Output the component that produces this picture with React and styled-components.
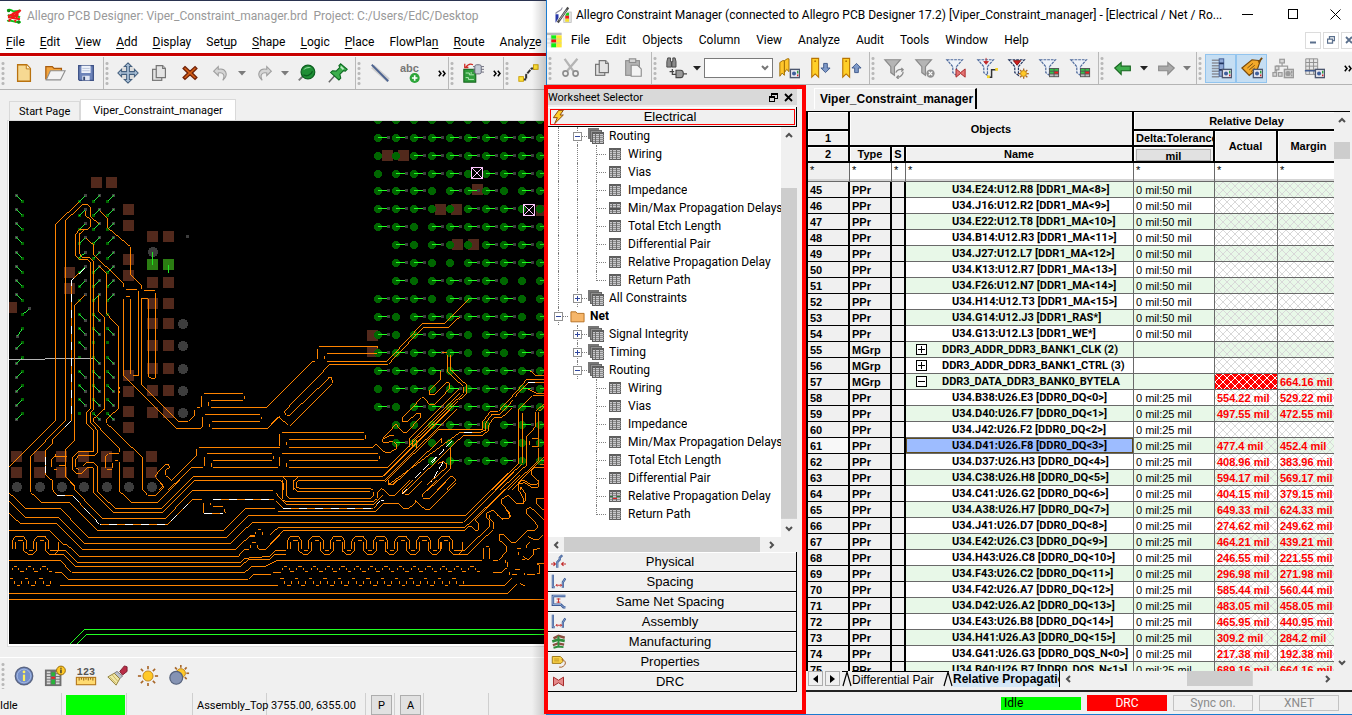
import React from 'react';
import styled, { createGlobalStyle, css } from 'styled-components';

const GlobalStyle = createGlobalStyle`
  * {
    box-sizing: border-box;
  }

  html, body {
    margin: 0;
    padding: 0;
  }

  body {
    background: #f0f0f0;
    color: #000;
    font-family: Roboto, 'Noto Sans', sans-serif;
    font-size: 12px;
    overflow: hidden;
  }

  button, select {
    margin: 0;
    padding: 0;
    border: 0;
    background: none;
    color: inherit;
    font: inherit;
    cursor: default;
  }
`;

/* ---------- data ---------- */

const designerMenu = ['_File', '_Edit', '_View', '_Add', '_Display', 'Set_up', '_Shape', '_Logic', '_Place', 'FlowPla_n', '_Route', 'Analy_ze'];

const managerMenu = ['File', 'Edit', 'Objects', 'Column', 'View', 'Analyze', 'Audit', 'Tools', 'Window', 'Help'];

const routingSheets = ['Wiring', 'Vias', 'Impedance', 'Min/Max Propagation Delays', 'Total Etch Length', 'Differential Pair', 'Relative Propagation Delay', 'Return Path'];

const leaves = (outer, marked, mark) =>
  routingSheets.map((label, i) => ({
    label,
    guides: [outer, outer, i === routingSheets.length - 1 ? 'last' : 'branch'],
    icon: i === marked ? mark : 'sheet',
  }));

const treeRows = [
  { label: 'Routing', guides: ['line', 'minus'], icon: 'sheets' },
  ...leaves('line', 3, 'sheetDark'),
  { label: 'All Constraints', guides: ['line', 'plus'], icon: 'sheets' },
  { label: 'Net', guides: ['minus'], icon: 'folder', bold: true },
  { label: 'Signal Integrity', guides: ['none', 'plus'], icon: 'sheets' },
  { label: 'Timing', guides: ['none', 'plus'], icon: 'sheets' },
  { label: 'Routing', guides: ['none', 'minus'], icon: 'sheets' },
  ...leaves('none', 6, 'sheetMarked'),
];

const categories = [
  ['Physical', 'physical'],
  ['Spacing', 'spacing'],
  ['Same Net Spacing', 'sameNet'],
  ['Assembly', 'spacing'],
  ['Manufacturing', 'layers'],
  ['Properties', 'tag'],
  ['DRC', 'bowtie'],
];

const ppr = (name, delta, actual, margin) => ({ type: 'PPr', name, delta, actual, margin });

const sheetRows = [
  ppr('U34.E24:U12.R8 [DDR1_MA<8>]', 50),
  ppr('U34.J16:U12.R2 [DDR1_MA<9>]', 50),
  ppr('U34.E22:U12.T8 [DDR1_MA<10>]', 50),
  ppr('U34.B14:U12.R3 [DDR1_MA<11>]', 50),
  ppr('U34.J27:U12.L7 [DDR1_MA<12>]', 50),
  ppr('U34.K13:U12.R7 [DDR1_MA<13>]', 50),
  ppr('U34.F26:U12.N7 [DDR1_MA<14>]', 50),
  ppr('U34.H14:U12.T3 [DDR1_MA<15>]', 50),
  ppr('U34.G14:U12.J3 [DDR1_RAS*]', 50),
  ppr('U34.G13:U12.L3 [DDR1_WE*]', 50),
  { type: 'MGrp', name: 'DDR3_ADDR_DDR3_BANK1_CLK (2)' },
  { type: 'MGrp', name: 'DDR3_ADDR_DDR3_BANK1_CTRL (3)' },
  { type: 'MGrp', name: 'DDR3_DATA_DDR3_BANK0_BYTELA', open: true, failed: true, margin: '664.16' },
  ppr('U34.B38:U26.E3 [DDR0_DQ<0>]', 25, '554.22', '529.22'),
  ppr('U34.D40:U26.F7 [DDR0_DQ<1>]', 25, '497.55', '472.55'),
  ppr('U34.J42:U26.F2 [DDR0_DQ<2>]', 25),
  ppr('U34.D41:U26.F8 [DDR0_DQ<3>]', 25, '477.4', '452.4'),
  ppr('U34.D37:U26.H3 [DDR0_DQ<4>]', 25, '408.96', '383.96'),
  ppr('U34.C38:U26.H8 [DDR0_DQ<5>]', 25, '594.17', '569.17'),
  ppr('U34.C41:U26.G2 [DDR0_DQ<6>]', 25, '404.15', '379.15'),
  ppr('U34.A38:U26.H7 [DDR0_DQ<7>]', 25, '649.33', '624.33'),
  ppr('U34.J41:U26.D7 [DDR0_DQ<8>]', 25, '274.62', '249.62'),
  ppr('U34.E42:U26.C3 [DDR0_DQ<9>]', 25, '464.21', '439.21'),
  ppr('U34.H43:U26.C8 [DDR0_DQ<10>]', 25, '246.55', '221.55'),
  ppr('U34.F43:U26.C2 [DDR0_DQ<11>]', 25, '296.98', '271.98'),
  ppr('U34.F42:U26.A7 [DDR0_DQ<12>]', 25, '585.44', '560.44'),
  ppr('U34.D42:U26.A2 [DDR0_DQ<13>]', 25, '483.05', '458.05'),
  ppr('U34.E43:U26.B8 [DDR0_DQ<14>]', 25, '465.95', '440.95'),
  ppr('U34.H41:U26.A3 [DDR0_DQ<15>]', 25, '309.2', '284.2'),
  ppr('U34.G41:U26.G3 [DDR0_DQS_N<0>]', 25, '217.38', '192.38'),
  ppr('U34.B40:U26.B7 [DDR0_DQS_N<1>]', 25, '689.16', '664.16'),
];

/* ---------- icons ---------- */

const funnel = (fill, stroke, dash) => (
  <path d="M2 3H19L12.500 10.500V20L8.500 17V10.500Z" fill={fill} stroke={stroke} strokeWidth="1.300" strokeDasharray={dash} />
);

const sheetGrid = (x, y) => (
  <g>
    <rect x={x} y={y} width="11" height="11" fill="#c9c9cc" stroke="#5e5e5e" />
    <path d={`M${x} ${y + 1}h11`} stroke="#5e5e5e" />
    <path d={`M${x} ${y + 3}h11M${x} ${y + 5}h11M${x} ${y + 7}h11M${x} ${y + 9}h11`} stroke="#8c8c8c" />
    <path d={`M${x + 3} ${y}v11M${x + 7} ${y}v11`} stroke="#6a6a6a" />
  </g>
);

const terminal = (gray) => (
  <g>
    <rect x="13.500" y="13.500" width="10" height="9" fill={gray ? '#cfcfcf' : '#e8e8f0'} stroke={gray ? '#9a9a9a' : '#4c566e'} strokeWidth="1.500" />
    <circle cx="17.500" cy="18" r="2.200" fill={gray ? '#9a9a9a' : '#3f5f9c'} />
    <path d="M21.500 15v3" stroke={gray ? '#999' : '#2f9e3c'} strokeWidth="1.500" />
    <path d="M21.500 19v2" stroke={gray ? '#999' : '#c22'} strokeWidth="1.500" />
  </g>
);

const rays = (cx, cy, a, b) =>
  [0, 45, 90, 135, 180, 225, 270, 315].map((r) => (
    <path key={r} d={`M${cx} ${cy - a}V${cy - b}`} transform={`rotate(${r} ${cx} ${cy})`} stroke="#a8672a" strokeWidth="1.800" />
  ));

const flag = (x, y, h) => (
  <path d={`M${x} ${y}l3-2h2v${h}l-2.500-2.500-2.500 3.500z`} fill="#ffc62b" stroke="#9c6a00" />
);

const bookmark = (
  <g>
    <path d="M3 1.500H10.500V22L6.700 18.500 3 22Z" fill="#ffcf28" stroke="#b87400" strokeWidth="1.200" />
    <circle cx="6.700" cy="4.500" r="1" fill="#b87400" />
  </g>
);

const drawings = {
  board: (
    <g fill="none" strokeWidth="2">
      <path d="M2 4c4-4 8 2 10 1s6 1 9-2M2 20c5-4 9 3 20 1M3 10c5 5 8-2 18 4" stroke="#10c018" strokeWidth="3" />
      <path d="M3 13l7-4 3 3 9-9M4 20l6-8 4 7 4-10M3 14l18 3M9 9l12-5" stroke="#f01818" strokeWidth="3" />
      <circle cx="4" cy="4" r="1.500" stroke="#0a8a10" />
      <circle cx="19" cy="21" r="1.500" stroke="#0a8a10" />
    </g>
  ),
  pen: (
    <g>
      <path d="M2 10c5-5 8-3 9-8" fill="none" stroke="#889" strokeWidth="1.500" />
      <rect x="13" y="8" width="10" height="14" fill="#e3e3e3" stroke="#bbb" />
      <rect x="15" y="9" width="5" height="4" fill="#1cd01c" />
      <rect x="15" y="13" width="5" height="4" fill="#f21b1b" />
      <rect x="15" y="17" width="5" height="4" fill="#f3e02c" />
      <path d="M2 11h4v9l-4 2z" fill="#2838a8" />
      <path d="M5 22L19 2" stroke="#fff" strokeWidth="5" />
      <path d="M5 22L19 2" stroke="#4b4b4b" strokeWidth="3" />
      <path d="M7 19L17 5" stroke="#d0d0d0" />
    </g>
  ),
  doc: (
    <g>
      <rect x="0" y="1" width="22" height="4" fill="#b9b9b9" />
      <rect x="0" y="5" width="22" height="18" fill="#f4f4f4" />
      <rect x="6" y="5" width="8" height="7" fill="#10f010" />
      <rect x="6" y="11" width="8" height="5" fill="#f01010" />
      <rect x="6" y="16" width="8" height="7" fill="#10f010" />
      <rect x="14" y="5" width="8" height="18" fill="#ffe830" />
      <path d="M0 10.500h22M0 16.500h22M6 5v18" stroke="#c5c5c5" />
    </g>
  ),
  file: (
    <g>
      <path d="M5 3H15L19 7V21H5Z" fill="#f6d992" stroke="#b9720f" strokeWidth="1.400" />
      <path d="M14.500 3V7.500H19" fill="#fff3cf" stroke="#b9720f" />
    </g>
  ),
  open: (
    <g>
      <path d="M2 19V5h7l2 2h8v4" fill="#f3a53e" stroke="#a85c0e" strokeWidth="1.400" />
      <path d="M2.500 19.500L7 9.500H23L18 19.500Z" fill="#f3f3f3" stroke="#8e8e8e" strokeWidth="1.200" />
    </g>
  ),
  save: (
    <g>
      <path d="M4 4H20V20H5L4 19Z" fill="#6c83b9" stroke="#3e5286" strokeWidth="1.400" />
      <rect x="7" y="4" width="10" height="8" fill="#eef2fa" />
      <path d="M8 7h8M8 9.500h8" stroke="#b9c3da" />
      <rect x="8" y="15" width="8" height="5" fill="#dfe5f3" />
      <rect x="9" y="16" width="2" height="4" fill="#33456f" />
    </g>
  ),
  move: (
    <g>
      <path d="M12 0L24 12 12 24 0 12Z" fill="#dcdcdc" />
      <path
        d="M12 1l4 4h-2.500v5.500H19V8l4 4-4 4v-2.500h-5.500V19H16l-4 4-4-4h2.500v-5.500H5V16l-4-4 4-4v2.500h5.500V5H8z"
        fill="#a9bfd6"
        stroke="#44607f"
        strokeWidth="1.100"
      />
    </g>
  ),
  copy: (
    <g fill="#e4e4e4" stroke="#757575" strokeWidth="1.300">
      <rect x="5" y="8" width="10" height="12" />
      <path d="M9 4h7l3 3v10H9z" />
      <path d="M16 4v3h3" />
    </g>
  ),
  remove: (
    <path d="M6.500 5l5.500 5 5.500-5 2 2-5 5 5 5-2 2-5.500-5-5.500 5-2-2 5-5-5-5z" fill="#d45f16" stroke="#71230a" strokeWidth="1.500" />
  ),
  undo: (
    <path d="M9 5v3c8-2 12 6 5 12 3-6 0-9-5-8v3L4 10z" fill="#d5d5d5" stroke="#9f9f9f" strokeWidth="1.200" />
  ),
  redo: (
    <path d="M15 5v3c-8-2-12 6-5 12-3-6 0-9 5-8v3l5-5z" fill="#d5d5d5" stroke="#9f9f9f" strokeWidth="1.200" />
  ),
  globe: (
    <g>
      <path d="M3 20l5-5" stroke="#777" strokeWidth="2" />
      <circle cx="13" cy="11" r="7.500" fill="#1f8f35" stroke="#0c5f1f" strokeWidth="1.300" />
      <path d="M8 9c2-5 8-4 9-2-3-1-6 0-9 2z" fill="#8cd79a" />
      <path d="M8 14c3 2 8 1 10-4" fill="none" stroke="#0c5f1f" strokeWidth="1.400" />
    </g>
  ),
  pin: (
    <g>
      <path d="M2 22l8-9" stroke="#666" strokeWidth="1.600" />
      <path d="M15 2l7 6-2 2-2-.5-4 4 1 4-2 2-9-8 2-2 4 .5 4-4-1-2z" fill="#3cae4c" stroke="#0c6a20" strokeWidth="1.200" />
      <path d="M15 5l3 3" stroke="#bdeec4" strokeWidth="2" />
    </g>
  ),
  line: (
    <g>
      <path d="M4 5L21 20" stroke="#cfcfcf" strokeWidth="5" />
      <path d="M3 3L21 21" stroke="#4b628f" strokeWidth="2" />
    </g>
  ),
  text: (
    <g>
      <text x="0" y="11" fontSize="12" fontWeight="bold" fontFamily="'Liberation Sans', sans-serif" fill="#777">abc</text>
      <circle cx="16" cy="17.500" r="5.500" fill="#2da53a" />
      <path d="M16 14.500v6M13 17.500h6" stroke="#fff" strokeWidth="1.800" />
    </g>
  ),
  chip: (
    <g>
      <rect x="2" y="8" width="13" height="14" fill="#2f9e3c" stroke="#17661f" strokeWidth="1.200" />
      <path d="M4 12h4v2h5M4 17h3v2h6M10 11v2" fill="none" stroke="#bff0c2" />
      <rect x="14" y="3" width="7" height="10" rx="2" fill="#c4cbd6" stroke="#667" />
      <path d="M12 5h2M12 8h2M12 11h2M21 5h3M21 8h3M21 11h3" stroke="#667" />
      <path d="M12 3C8 1 6 3 4 6M3 2v4h4" fill="none" stroke="#cf2b23" strokeWidth="1.400" />
    </g>
  ),
  route: (
    <g>
      <path d="M5 19h5v-5l6-7h5" fill="none" stroke="#333" strokeWidth="2.200" strokeDasharray="5 1" />
      <rect x="2" y="16" width="5" height="5" fill="#ffe33a" stroke="#c99c00" />
      <rect x="18" y="3" width="5" height="5" fill="#ffe33a" stroke="#c99c00" />
    </g>
  ),
  info: (
    <g>
      <circle cx="12" cy="12" r="9.500" fill="#7590cb" stroke="#5a6582" strokeWidth="1.500" />
      <circle cx="12" cy="12" r="7.500" fill="none" stroke="#a9bce4" />
      <circle cx="12" cy="7.500" r="1.500" fill="#fff05a" />
      <path d="M12 10.500v7" stroke="#fff05a" strokeWidth="2.400" />
    </g>
  ),
  gridInfo: (
    <g>
      <rect x="1" y="5" width="18" height="18" fill="#6f6f6f" />
      <g fill="#d8d8d8">
        {[7, 10, 13, 16, 19].map((y) => [3, 13].map((x) => <rect key={x + '-' + y} x={x} y={y} width="4" height="2" />))}
      </g>
      <rect x="8" y="8" width="4" height="4" fill="#27b43a" />
      <rect x="8" y="13" width="4" height="2" fill="#e22" />
      <rect x="8" y="16" width="4" height="5" fill="#27b43a" />
      <circle cx="18.500" cy="6" r="4.800" fill="#ffc926" stroke="#8f6200" />
      <path d="M18.500 5v4M18.500 3v1" stroke="#333" strokeWidth="1.500" />
    </g>
  ),
  ruler: (
    <g>
      <text x="2" y="11" fontSize="11" fontWeight="bold" fontFamily="'Liberation Mono', monospace" fill="#555">123</text>
      <rect x="1.500" y="13.500" width="21" height="8" fill="#ffdb70" stroke="#b5761a" strokeWidth="1.200" />
      <path d="M4.500 14v3M7 14v2M9.500 14v3M12 14v2M14.500 14v3M17 14v2M19.500 14v3" stroke="#8c5a10" />
    </g>
  ),
  brush: (
    <g>
      <path d="M15 7l5-6 3 1v5l-5 4z" fill="#b82c46" stroke="#7a1a2c" />
      <path d="M12 7l6 5-3 3-6-6z" fill="#b9bfcb" stroke="#777" />
      <path d="M9 9l6 6-4 7-9-9z" fill="#f1e6a6" stroke="#8c7b35" />
      <path d="M4 13l7 7M7 11l6 7" stroke="#c5b05a" />
    </g>
  ),
  sun: (
    <g>
      {rays(12, 12, 7.5, 11)}
      <circle cx="12" cy="12" r="5.500" fill="#ffc928" stroke="#c08114" />
    </g>
  ),
  eclipse: (
    <g>
      {rays(14, 9, 6, 9)}
      <circle cx="14" cy="9" r="5" fill="#ffc928" stroke="#c08114" />
      <circle cx="9" cy="14" r="7" fill="#8593b3" stroke="#55617c" strokeWidth="1.300" />
    </g>
  ),
  cut: (
    <g fill="none" stroke="#8d8d8d" strokeWidth="1.800">
      <path d="M5 2l10 14M19 2L8 15" stroke="#b4b4b4" strokeWidth="2.500" />
      <circle cx="6" cy="18" r="2.800" />
      <circle cx="17" cy="18" r="2.800" />
    </g>
  ),
  paste: (
    <g stroke="#8d8d8d" strokeWidth="1.200">
      <rect x="4" y="4" width="15" height="16" fill="#b5b5b5" />
      <rect x="8" y="2" width="7" height="4" fill="#d5d5d5" />
      <path d="M10 9h7l4 4v8H10z" fill="#f3f3f3" />
    </g>
  ),
  find: (
    <g>
      <path d="M2 11V5l1-4h3v4h1v6zM12 11V5l-1-4H8.500v4h-1v6z" fill="#8a8a8a" stroke="#444" />
      <path d="M5 16h5M8 13v6h4M20 18.500h4" stroke="#444" strokeWidth="1.300" fill="none" />
      <path d="M12 14.500h5c4 0 4 8 0 8h-5z" fill="#9a9a9a" stroke="#444" strokeWidth="1.200" />
    </g>
  ),
  flags: (
    <g>
      {flag(2, 6, 16)}
      {flag(7, 4, 14)}
      {terminal()}
    </g>
  ),
  bookDown: (
    <g>
      {bookmark}
      <path d="M16 7h4v5h3l-5 5-5-5h3z" fill="#7f9ac8" stroke="#3c5788" />
    </g>
  ),
  bookUp: (
    <g>
      {bookmark}
      <path d="M16 17h4v-5h3l-5-5-5 5h3z" fill="#7f9ac8" stroke="#3c5788" />
    </g>
  ),
  funnelRefresh: (
    <g>
      {funnel('#b5b5b5', '#8b8b8b')}
      <path d="M14 17c1-3 4-4 7-3M22 16c0 3-3 6-6 6M20 12l2 2-2 2M17 20l-2 2 2 2" fill="none" stroke="#8b8b8b" strokeWidth="1.400" />
    </g>
  ),
  funnelClear: (
    <g>
      {funnel('#b5b5b5', '#8b8b8b')}
      <circle cx="18" cy="18" r="4.500" fill="#8f8f8f" />
      <path d="M16 16l4 4M20 16l-4 4" stroke="#fff" strokeWidth="1.400" />
    </g>
  ),
  funnelDrc: (
    <g>
      {funnel('#eef2f8', '#4e6a9c', '3 1')}
      <path d="M12 13l5 4 5-4v9l-5-4-5 4z" fill="#e37474" stroke="#a62323" />
    </g>
  ),
  funnelRoute: (
    <g>
      {funnel('#eef2f8', '#4e6a9c', '3 1')}
      <path d="M11 1v5M8.500 5h5l-2.500 3z" stroke="#c22a2a" fill="#c22a2a" />
      <path d="M13 22h4v-8h5" fill="none" stroke="#333" strokeWidth="1.600" />
      <rect x="12" y="20" width="3" height="3" fill="#f6d62c" />
      <rect x="21" y="12" width="3" height="3" fill="#f6d62c" />
    </g>
  ),
  funnelNew: (
    <g>
      {funnel('#eef2f8', '#22345e', '3 1')}
      <path d="M7 4h8l-4 5z" fill="#d31f1f" stroke="#7e1010" />
      <g transform="translate(8.600 8.600) scale(.8)">{rays(12, 12, 4, 7)}</g>
      <circle cx="18" cy="18" r="3.200" fill="#ffc928" stroke="#c08114" />
    </g>
  ),
  funnelGrid: (
    <g>
      {funnel('#eef2f8', '#4e6a9c', '3 1')}
      <rect x="12" y="12" width="11" height="10" fill="#555" />
      <rect x="13" y="13" width="4" height="2" fill="#35c049" />
      <rect x="18" y="13" width="4" height="2" fill="#35c049" />
      <rect x="13" y="16" width="4" height="2" fill="#35c049" />
      <rect x="18" y="16" width="4" height="2" fill="#e22" />
      <rect x="13" y="19" width="4" height="2" fill="#bbb" />
      <rect x="18" y="19" width="4" height="2" fill="#bbb" />
    </g>
  ),
  back: <path d="M3 12l7-6v4h10v5H10v4z" fill="#3fae4d" stroke="#17661f" strokeWidth="1.200" />,
  forward: <path d="M21 12l-7-6v4H4v5h10v4z" fill="#a9a9a9" stroke="#8a8a8a" strokeWidth="1.200" />,
  rowsTool: (
    <g>
      <path d="M2 3.500h8M2 6.500h8M2 9.500h8M2 12.500h8M2 15.500h8M2 18.500h8M2 21.500h8" stroke="#8a8f99" strokeWidth="1.800" />
      <rect x="10" y="2" width="5" height="19" fill="#8fa9d6" stroke="#3f5a90" />
      <path d="M10 7h5M10 14h5" stroke="#22345e" strokeWidth="2" />
      {terminal()}
    </g>
  ),
  tagTool: (
    <g>
      <path d="M1 12L12 3l9 1-3 9-9 7z" fill="#f2a92a" stroke="#7a4a0a" strokeWidth="1.300" />
      <path d="M7 12l6-5M9 14l6-5M11 16l4-4" stroke="#7a4a0a" />
      <path d="M19 6l4-5" stroke="#7a4a0a" strokeWidth="2" />
      {terminal()}
    </g>
  ),
  treeTool: (
    <g fill="#d8d8d8" stroke="#9a9a9a" strokeWidth="1.300">
      <path d="M11 6v4M5 16v-6h12v3M5 10L3 17" fill="none" />
      <rect x="8.500" y="2.500" width="5" height="4" />
      <rect x="3.500" y="10" width="4" height="4" />
      <rect x="1" y="17" width="4" height="4" />
      <rect x="7" y="17" width="4" height="4" />
      {terminal(true)}
    </g>
  ),
  gridTool: (
    <g>
      <path d="M3 2h13v17H3zM3 6h13M3 10h13M3 14h13M7 2v17M11.500 2v17" fill="#e6e6e6" stroke="#8c8c8c" />
      <path d="M2 15h12" stroke="#3f5a90" strokeWidth="1.600" />
      {terminal()}
    </g>
  ),
  bolt: <path d="M13 2l7 0-5 7h5L7 22l4-9H5z" fill="#ffce2b" stroke="#8f4a10" strokeWidth="1.500" />,
  physical: (
    <g fill="none">
      <path d="M10 22v-9l4-4V6l4-4" stroke="#33538f" strokeWidth="3.500" />
      <path d="M10 22v-9l4-4V6l4-4" stroke="#a9c0e6" strokeWidth="1.200" />
      <path d="M0 16h6M4 13l3 3-3 3M24 16h-6M20 13l-3 3 3 3" stroke="#c22a2a" strokeWidth="1.800" />
    </g>
  ),
  spacing: (
    <g fill="none">
      <path d="M3 1v20h3M19 22v-9l4-6" stroke="#33538f" strokeWidth="3.500" />
      <path d="M3 1v20h3M19 22v-9l4-6" stroke="#a9c0e6" strokeWidth="1.200" />
      <path d="M8 18h9M10 16l-2 2 2 2M15 16l2 2-2 2" stroke="#c22a2a" strokeWidth="1.500" />
    </g>
  ),
  sameNet: (
    <g fill="none">
      <path d="M23 3H3V17H16l4 4h3" stroke="#33538f" strokeWidth="4" />
      <path d="M23 3H3V17H16l4 4h3" stroke="#a9c0e6" strokeWidth="1.400" />
      <path d="M12 7v7M9 8h6M9 13h6" stroke="#c22a2a" strokeWidth="1.500" />
    </g>
  ),
  layers: (
    <g strokeWidth="2.500" fill="none">
      <path d="M3 18l8-3 10 2" stroke="#8a4f3f" strokeWidth="3.500" />
      <path d="M2 12l9-3 11 2" stroke="#2f8e3c" strokeWidth="4.500" />
      <path d="M4 7l8-4 10 3" stroke="#8a4f3f" strokeWidth="4" />
      <path d="M4 22l8-2 8 1M12 3v18" stroke="#2f8e3c" strokeWidth="3" />
    </g>
  ),
  tag: (
    <g>
      <path d="M2 4h13l4 4v4l-3 3H2z" fill="#f9d046" stroke="#8d6500" strokeWidth="1.300" />
      <path d="M5 8h8M5 11h8" stroke="#a37a10" />
      <path d="M17 9c8 1 8 9 0 12h-4" fill="none" stroke="#a05a20" strokeWidth="1.500" />
    </g>
  ),
  bowtie: <path d="M4 5l8 5 8-5v14l-8-5-8 5z" fill="#e58a8a" stroke="#a52a2a" strokeWidth="1.600" />,
  folder: (
    <path d="M1.500 20.500v-16h8l2 2.500h11v13.500z" fill="#f6b66a" stroke="#b56f20" strokeWidth="1.500" />
  ),
};

function Icon({ name, size = 24 }) {
  return (
    <svg width={size} height={size} viewBox="0 0 24 24" aria-hidden="true">
      {drawings[name]}
    </svg>
  );
}

function SheetIcon({ kind }) {
  return (
    <svg width="16" height="16" viewBox="0 0 16 16" shapeRendering="crispEdges" aria-hidden="true">
      {kind === 'sheets' ? (
        <g>
          <rect x="0" y="0" width="11" height="11" fill="#777" />
          <rect x="2" y="2" width="11" height="11" fill="#8f8f8f" stroke="#666" />
          {sheetGrid(4.5, 4.5)}
        </g>
      ) : (
        <g>
          {sheetGrid(2.5, 2.5)}
          {kind === 'sheetDark' && <path d="M3 9h10" stroke="#555" strokeWidth="2" />}
          {kind === 'sheetMarked' && (
            <>
              <path d="M3 8.500h3M10 8.500h3" stroke="#2a7a3a" />
              <path d="M6 10.500h4" stroke="#d22" />
            </>
          )}
        </g>
      )}
    </svg>
  );
}

function Chevron({ dir, color = '#505050' }) {
  const paths = { up: 'M2 7l3-3 3 3', down: 'M2 3l3 3 3-3', left: 'M7 2L4 5l3 3', right: 'M3 2l3 3-3 3' };
  return (
    <svg width="10" height="10" viewBox="0 0 10 10" aria-hidden="true">
      <path d={paths[dir]} fill="none" stroke={color} strokeWidth="2" />
    </svg>
  );
}

/* ---------- board drawing ---------- */

// One character per ball: "-" has a fanout, "o" is bare, "." is missing
const balls = [
  'oooooooooo',
  '----------',
  'oo--------',
  'o----o----',
  '---o---o--',
  '---oo---oo',
  '--o-------',
  '.-o-oo----',
  '.--oo-----',
  '.-o----oo-',
  '---o----o-',
  '-o------o-',
  '-o---o----',
  '-----o-o--',
  '----------',
  'o--o------',
  '-o--------',
  '.oo---o---',
  '.-ooo---o-',
  '...o----o-',
];

const smdPads = [
  [96, 182], [111, 182], [128, 209], [128, 225], [152, 236], [168, 236],
  [128, 259], [128, 275], [69, 272], [69, 288], [11, 307],
  [152, 282], [168, 282], [152, 303], [168, 303], [152, 323], [168, 323], [152, 345], [168, 345],
  [152, 368], [168, 368], [152, 390], [168, 390], [152, 412], [168, 412],
  [128, 375], [128, 391], [128, 411], [128, 427],
  [387, 155], [403, 155], [477, 189], [440, 209], [456, 209], [541, 210],
  [457, 244], [473, 244], [372, 335], [372, 351],
];

const bottomPads = [16, 39, 61, 83, 106, 128, 151];

const viaCircles = [[183, 324], [183, 346], [183, 369], [183, 391], [183, 413], [153, 252]];

// Coordinates below are thirds of a pixel, measured from the drawing origin of each block
const upperTraces = `
M238-86L166-15V573L28 710M298-16L271-42V-68L262-78H250L196-28V573L92 678V780
M256 113L214 152V573L158 628L157 640L137 662V735L157 752V780
M256 194L223 226V632L196 660V740L223 768V780
M256-58V-45L272-30V-10L262-2H240L227 12V78L238 88H262L272 98V536L260 545V582L281 602V665H236L218 682V720L230 730H245L262 712H278
M256-2L238 12V70L246 82H268L281 96V536L272 548V578L292 600V668L286 676H236L227 688V712L236 720
M259 25L281 45V75L340 130L370 160V172M298 110L320 130V252L356 290V535L320 567V580L427 682V780
M296 194V245L314 262V537L282 565V577L358 655V665M300-58L323-35V-7L391 50V134L425 168V178
M378 178H410M432 181H465M466 188V445H453L446 440V210L441 205H425V465L534 574H565L584 555V540M415 182V438H400M391 206V432M378 200H391M370 206V437L529 596H602L607 590V562
M592 532H600M604 530V498M613 490H728M733 497V506M634 511H730M626 517V528M634 532H800L840 492
M616 553H780M786 560V568M637 574H780M628 582V592M637 596H803L835 563L840 560
M840 616V648M598 653H840M590 657V677L515 752L497 736V720L510 712L505 703H497L467 735V742L490 765L478 780
M620 670H815M613 680V707M640 691H815M822 678V686M634 698V710M575 712H609M640 712H835M575 712L505 780M1148 739H580L540 780M840 751H585L555 780
M155 710V687L162 680H200M162 718H170M178 708H196M250 706L262 697H280L292 710V780M281 715V780
M317 715V680L326 671H356M338 715V700M322 718H335M345 691H355M358 697V780M358 470V478M358 484V490M167 680V672
`;

const upperRightTraces = `
M598 206L524 281H457L351 394H172M570 260L536 292H460L355 403H180L45 542M148 349H322V355M142 357V388M172 370H320M163 378V388M136 394H127L0 521
M45 542V550L50 556H58L180 442M175 442H185L187 460L60 587M0 587L22 563H30L55 587
M37 607H282M287 614V626M58 628H282M28 613V648M49 636V646M58 652H308L318 643L345 667H360L380 655V645L370 635H362L350 637H338V627L358 618H372
M0 652H25M37 670H325M0 670H5M10 678V688M330 678V688M58 691H325M28 680V708M49 700V710M0 712H22M58 712H352
M85 739H338L565 512M85 751H345L560 537M88 775H302M0 739H38L49 750V780M0 751H30L40 760V780M85 739L70 755V780M85 751L79 758V775
M533 375V425L580 470V490L352 712M542 375V420L590 465V490L566 512M515 367H530
M512 422V448L478 483V495H492L528 458H538L540 475L492 525H480L462 503H455L398 562V575H412L440 550H452V562L410 607H400L378 583L338 625
M418 650V625L565 478M427 655V632L570 490M440 655V630M342 739L540 540
M640 598H505L345 757M630 607H570L355 765H370L515 625V638M637 616H580L400 790
M630 598H638V575L662 544H685L735 490M630 607L648 600V578L666 553H690L730 510M637 616L656 602V585L672 563H695L725 535
M735 490L770 448H823M735 500L775 457H823M745 540L788 497H823M823 437H797L780 422M823 490H800L775 478
M745 540V700L665 780M757 550V700L675 780M770 620V705L690 780M770 620L797 590V545L823 520M823 530L806 545V650M780 632V645M787 627H803M787 650H803
M806 655V690L715 780M823 680L725 780M542 653V715L470 785M505 700L520 695L530 702V712L470 765M500 780L540 740H550L557 750L530 780
M745 770V758L760 750L785 765H800L806 755L785 735V722L795 712H823M752 780V770M823 704H810
`;

const lowerTraces = `
M27 358H1633M27 340H1523L1550 312M180 316H835M1384 316H1515L1535 295M185 278L205 298H745L760 283H812M165 277H185M820 277H842M1480 277H1505L1522 262V247
M27 241H180L215 277H735L755 259H795L832 241H1445M1480 241H1495L1520 215V200L1498 180V165H1512L1535 188H1545L1575 158
M152 211H196L233 247H723L735 235L810 229L828 211H857M150 223H190L226 259H723L745 238H810L825 223H857
M27 151H148L190 193H200L238 229H716L722 220L735 208H748M27 99L60 130H170L247 208H706L750 168H765M27 64L77 112H175L253 190H692L757 127H1390L1540-23
M27 38L77 85H181L264 172H680L745 106H1397L1525-22M92 0V37L124 67H208L292 151H671L738 85H825
M158 0V30L172 46H217L299 133H503L577 58H605M640 58H822M196-10L223 17V28L306 115H497L577 31H818
M281 0V37L340 97H488L582 2H835M292 0V35L346 85H485L570 0M358 0V33L394 67H473L540 0M427 0V28L443 46H467L492 20L480 8
M611 70V100H670M632 68V76M640 79H670M674 88V97H678M766 163V157M773 149H782M788 157V165M750 170H765M752 195V205M757 187H768M773 195V205L780 208H796L840 165M742 208H748
M810 165L835 142H1395L1540 5M810 192L852 151H1393L1405 140H1415L1425 151H1435L1435 130L1425 120L1560-15
M848 0V58L855 64H1122L1132 55V38L1145 25L1170 47H1183L1230 0M860 0V48L868 55H1113L1120 48V36M882 0V24L893 34H1110M890 10V20L897 25H1112L1120 32
M828 40L858 73H1120L1150 45M828 62L850 85H1120L1142 62M835 94H1128L1150 70H1196L1210 85H1225L1246 70V60M1246 62L1275 88H1290L1368 8
M1165 0V10L1175 15L1190 0M1207 42V32L1240 0M1215 45H1225L1268 2M1268 52V42L1310 0M1270 55H1290L1340 5
M1366 211H1395L1470 137V122L1460 112V100L1480 90L1505 115H1528V98L1505 70V58L1525 45L1550 72H1570V55L1555 28V12L1575 8L1595 22H1615V0
M1366 223H1403L1480 148V125L1470 118V105M1490 103L1508 118M1518 88L1533 110M1570 70L1578 58V45L1563 22
M1633 55H1610V72L1633 92M1580 100V88L1592 82L1633 120M1580 100L1612 135V143L1605 151H1582L1545 188M1450 237V205M1470 237V205M1458 200H1468
M1610 280H1620V258L1610 250H1633M1580 285H1605M1535 285H1550M1530 275V285M1518 240V250M1545 270H1560M1575 280V285M1560 310L1575 318
M1550 205H1562M1555 215V225M1565 240H1575M1580 205V195L1590 188M1585 170L1600 178H1615L1630 165M1570 230L1585 240L1600 225V210L1620 205
`;

const jogs = [60, 125, ...Array.from({ length: 8 }, (_, i) => 885 + i * 64.6)]
  .map((x) => `M${x - 23} 207V182L${x - 13} 169H${x + 10}L${x + 20} 182V207M${x + 26} 211H${x + 38}M${x - 14} 207V187M${x - 6} 181H${x + 8}M${x + 12} 185V212L${x + 24} 223H${x + 38}L${x + 50} 212V185`)
  .join('');

const meanderUpper = [27, 70, 113, ...Array.from({ length: 14 }, (_, i) => 838 + i * 43)]
  .map((x) => `M${x + 14} 259H${x + 24}M${x + 30} 265V271M${x + 33} 276H${x + 44}M${x + 10} 265V271`)
  .join('');

const meanderLower = [27, 71, 115, ...Array.from({ length: 13 }, (_, i) => 838 + i * 43)]
  .map((x) => `M${x + 3} 295H${x + 13}M${x + 16} 302V312M${x + 23} 316H${x + 34}M${x + 37} 302V312`)
  .join('');

const highlighted = 'M256 113L214 152V573M214 573L183 604M137 680V708M137 708V730';
const highlightedLower = 'M172 46H217L299 133H503L577 58M640 58H822M611 100H670M850 85H1120L1142 62H1155M1207 42L1220 28';

const dogbones = [];
[-103, -61, -19, 23, 67, 110, 152, 194].forEach((y) => dogbones.push([49, y, 67, y + 17]));
[338, 383, 425, 467, 509, 551].forEach((y) => dogbones.push([49, y + 18, 67, y]));
dogbones.push([88, 236, 68, 254], [52, 319, 67, 296]);
[238, 281, 323].forEach((x, i) => {
  [-103, -61, -19, 23, 67, 110, 152, 194].forEach((y) => dogbones.push([x + 18, y, x, y + 17]));
  [254, 296, 338, 383, 425, 467, 509, 551].forEach((y) => {
    const bare = (y === 338 && i > 0) || ((y === 383 || y === 551) && i === 0) || (y === 254 && i === 2);
    dogbones.push(bare ? [x, y, x, y] : [x + 18, y + 17, x, y]);
  });
});

function Block({ x, y, children }) {
  return (
    <g transform={`translate(${x} ${y}) scale(.33333)`} fill="none" stroke="#ff8400" strokeWidth="3">
      {children}
    </g>
  );
}

function BoardDrawing() {
  return (
    <BoardSvg role="img" aria-label="Board layout" shapeRendering="crispEdges">
      <g transform="translate(-9 -121)">
        <g fill="#52291c">
          {smdPads.map(([x, y]) => (
            <rect key={`${x}-${y}`} x={x - 5} y={y - 5} width="11" height="11" />
          ))}
          {bottomPads.map((x) => (
            <g key={x}>
              <rect x={x - 5} y="451" width="11" height="11" />
              <rect x={x - 5} y="467" width="11" height="11" />
              <circle cx={x + 1} cy="487" r="5" fill="#3d3d3d" />
            </g>
          ))}
        </g>
        <g fill="#3d3d3d">
          {viaCircles.map(([x, y]) => (
            <circle key={y} cx={x} cy={y} r="5" />
          ))}
          <rect x="186" y="235" width="3" height="3" />
        </g>
        <g fill="#2b7d12">
          <rect x="147" y="259" width="11" height="11" />
          <rect x="163" y="259" width="11" height="11" />
        </g>
        <path d="M152.500 252V265M168.500 265V273" stroke="#22e622" />

        {balls.map((line, row) =>
          line.split('').map((kind, col) => {
            if (kind === '.') return null;
            const cx = 378 + col * 18;
            const cy = 120 + row * 18 - (row > 3 ? 1 : 0);
            return (
              <g key={`${row}-${col}`}>
                <circle cx={cx} cy={cy} r="4" fill="#006600" />
                {kind === '-' && (
                  <>
                    <rect x={cx + 9} y={cy - 2} width="3" height="3" fill="#3d3d3d" />
                    <rect x={cx} y={cy - 1} width="9" height="1" fill="#22ff22" />
                  </>
                )}
              </g>
            );
          })
        )}

        <Block x={0} y={230}>
          {dogbones.map(([x1, y1, x2, y2]) => (
            <g key={`${x1}-${y1}-${x2}`}>
              <rect x={x2 - 4} y={y2 - 4} width="9" height="9" fill="#006600" stroke="none" />
              {x1 !== x2 && <rect x={x1 - 4} y={y1 - 4} width="9" height="9" fill="#444" stroke="none" />}
              <path d={`M${x1} ${y1}L${x2} ${y2}`} stroke="#22e63a" />
            </g>
          ))}
          <path d="M27 388H135M135 385H281" stroke="#b4b4b4" />
          <path d={upperTraces} />
          <path d={highlighted} stroke="#fff" strokeDasharray="24 24" />
        </Block>
        <Block x={270} y={230}>
          <path d={upperRightTraces} />
          <path d="M545 633L480 705M500 680L430 750M520 695L485 755M582 607H606M775 457H795" stroke="#fff" strokeDasharray="24 9" />
        </Block>
        <Block x={0} y={480}>
          <path d={lowerTraces + jogs} />
          <path d={meanderUpper + meanderLower} />
          <path d={highlightedLower} stroke="#fff" strokeDasharray="24 24" />
          <path d="M210 491L253 448H1633M232 491L260 463H1633" stroke="#22ff22" />
        </Block>

        <g fill="none" stroke="#ffc8ff">
          <path d="M471.500 167.500h11v11h-11zM471.500 167.500l11 11M482.500 167.500l-11 11" />
          <path d="M523.500 204.500h11v11h-11zM523.500 204.500l11 11M534.500 204.500l-11 11" />
        </g>
      </g>
    </BoardSvg>
  );
}

/* ---------- small pieces ---------- */

function Tool({ icon, label, pressed }) {
  return (
    <ToolButton type="button" aria-label={label} title={label} $pressed={pressed}>
      <Icon name={icon} />
    </ToolButton>
  );
}

function Drop({ label, muted }) {
  return (
    <DropButton type="button" aria-label={label}>
      <svg width="8" height="5" viewBox="0 0 8 5" aria-hidden="true">
        <path d="M0 0h8L4 4.500z" fill={muted ? '#7b7b7b' : '#222'} />
      </svg>
    </DropButton>
  );
}

function MenuLabel({ text }) {
  const at = text.indexOf('_');
  if (at < 0) return text;
  return (
    <>
      {text.slice(0, at)}
      <u>{text[at + 1]}</u>
      {text.slice(at + 2)}
    </>
  );
}

function Menu({ items }) {
  return items.map((item) => (
    <MenuItem type="button" key={item}>
      <MenuLabel text={item} />
    </MenuItem>
  ));
}

function MoreIcon() {
  return (
    <svg width="8" height="7" viewBox="0 0 8 7" aria-hidden="true">
      <path d="M.8.8L3 3.500.8 6.200M4.800.8L7 3.500 4.800 6.200" fill="none" stroke="#000" strokeWidth="1.500" />
    </svg>
  );
}

function Slope() {
  return (
    <SlopeSvg width="10" height="16" viewBox="0 0 10 16" aria-hidden="true">
      <path d="M0 .5H6M1 15L5 1L9 15" fill="none" stroke="#000" strokeWidth="1.200" />
    </SlopeSvg>
  );
}

/* ---------- windows ---------- */

function DesignerWindow() {
  return (
    <Designer>
      <DesignerTitle>
        <Icon name="board" size={16} />
        <span>Allegro PCB Designer: Viper_Constraint_manager.brd&nbsp; Project: C:/Users/EdC/Desktop</span>
      </DesignerTitle>
      <DesignerMenu>
        <Menu items={designerMenu} />
      </DesignerMenu>
      <Toolbar>
        <ToolGroup>
          <Grip />
          <Tool icon="file" label="New" />
          <Tool icon="open" label="Open" />
          <Tool icon="save" label="Save" />
        </ToolGroup>
        <ToolGroup>
          <Grip />
          <Tool icon="move" label="Move" />
          <Tool icon="copy" label="Copy" />
          <Tool icon="remove" label="Delete" />
          <Tool icon="undo" label="Undo" />
          <Drop label="Undo list" muted />
          <Tool icon="redo" label="Redo" />
          <Drop label="Redo list" muted />
          <Tool icon="globe" label="Unfix" />
          <Tool icon="pin" label="Fix" />
        </ToolGroup>
        <ToolGroup>
          <Grip />
          <Tool icon="line" label="Add line" />
          <Tool icon="text" label="Add text" />
          <MoreButton type="button" $wide aria-label="More drawing tools"><MoreIcon /></MoreButton>
        </ToolGroup>
        <ToolGroup>
          <Grip />
          <Tool icon="chip" label="Place" />
          <MoreButton type="button" aria-label="More placement tools"><MoreIcon /></MoreButton>
        </ToolGroup>
        <ToolGroup $last>
          <Grip />
          <Tool icon="route" label="Add connect" />
        </ToolGroup>
      </Toolbar>
      <TabStrip>
        <Tab type="button">Start Page</Tab>
        <Tab type="button" $active>Viper_Constraint_manager</Tab>
      </TabStrip>
      <BoardFrame>
        <BoardDrawing />
      </BoardFrame>
      <BottomTools>
        <Grip />
        <Tool icon="info" label="Show element" />
        <Tool icon="gridInfo" label="Constraints" />
        <Tool icon="ruler" label="Measure" />
        <Tool icon="brush" label="Dehighlight" />
        <Tool icon="sun" label="Highlight" />
        <Tool icon="eclipse" label="Shadow" />
      </BottomTools>
      <DesignerStatus>
        <StatusPart $width={62}>Idle</StatusPart>
        <StatusPart $width={65}><Lamp /></StatusPart>
        <StatusPart $width={66} />
        <StatusPart $width={74} $pad={4}>Assembly_Top</StatusPart>
        <StatusPart $width={99} $pad={4}>3755.00, 6355.00</StatusPart>
        <StatusPart $width={29} $pad={5}><StatusKey type="button">P</StatusKey></StatusPart>
        <StatusPart $width={29} $pad={5}><StatusKey type="button">A</StatusKey></StatusPart>
        <StatusPart $width={65} />
      </DesignerStatus>
    </Designer>
  );
}

function Tree() {
  return (
    <TreeArea>
      <TreeList>
        {treeRows.map((row, i) => (
          <TreeRow key={i} $bold={row.bold}>
            {row.guides.map((kind, level) => (
              <Guide key={level} $kind={kind}>
                {(kind === 'plus' || kind === 'minus') && (
                  <Toggle type="button" aria-label={`${kind === 'plus' ? 'Expand' : 'Collapse'} ${row.label}`}>
                    <svg width="5" height="5" viewBox="0 0 5 5" shapeRendering="crispEdges" aria-hidden="true">
                      <path d={kind === 'plus' ? 'M0 2.500h5M2.500 0v5' : 'M0 2.500h5'} stroke="#31479e" />
                    </svg>
                  </Toggle>
                )}
              </Guide>
            ))}
            <TreeIcon>{row.icon === 'folder' ? <Icon name="folder" size={15} /> : <SheetIcon kind={row.icon} />}</TreeIcon>
            <TreeLabel>{row.label}</TreeLabel>
          </TreeRow>
        ))}
      </TreeList>
      <VScroll>
        <ScrollButton type="button" aria-label="Scroll up"><Chevron dir="up" /></ScrollButton>
        <ScrollTrack $before={45} $thumb={330} $after={2} />
        <ScrollButton type="button" aria-label="Scroll down"><Chevron dir="down" /></ScrollButton>
      </VScroll>
    </TreeArea>
  );
}

function WorksheetSelector() {
  return (
    <Dock>
      <DockHeader>
        <span>Worksheet Selector</span>
        <DockButtons>
          <DockButton type="button" aria-label="Float panel">
            <svg width="9" height="9" viewBox="0 0 9 9" shapeRendering="crispEdges" aria-hidden="true">
              <path d="M2.500 3V.5h6v5H6M2 1h7" fill="none" stroke="#000" />
              <path d="M.5 3.500h5v5h-5zM0 4h6" fill="none" stroke="#000" />
            </svg>
          </DockButton>
          <DockButton type="button" aria-label="Close panel">
            <svg width="9" height="9" viewBox="0 0 9 9" aria-hidden="true">
              <path d="M1 1l7 7M8 1L1 8" stroke="#000" strokeWidth="1.800" />
            </svg>
          </DockButton>
        </DockButtons>
      </DockHeader>
      <Category type="button" $active>
        <Icon name="bolt" size={16} />
        <span>Electrical</span>
      </Category>
      <Tree />
      <HScroll>
        <ScrollButton type="button" aria-label="Scroll left"><Chevron dir="left" /></ScrollButton>
        <ScrollTrack $row $before={0} $thumb={196} $after={4} />
        <ScrollButton type="button" aria-label="Scroll right"><Chevron dir="right" /></ScrollButton>
      </HScroll>
      {categories.map(([label, icon]) => (
        <Category type="button" key={label}>
          <Icon name={icon} size={15} />
          <span>{label}</span>
        </Category>
      ))}
    </Dock>
  );
}

function Sheet() {
  return (
    <SheetTable>
      <colgroup>
        <col style={{ width: 42 }} />
        <col style={{ width: 42 }} />
        <col style={{ width: 14 }} />
        <col />
        <col style={{ width: 81 }} />
        <col style={{ width: 63 }} />
        <col style={{ width: 63 }} />
        <col style={{ width: 20 }} />
      </colgroup>
      <thead>
        <tr>
          <Head $height={19} />
          <Head colSpan={3} rowSpan={2}>Objects</Head>
          <Head colSpan={4}>Relative Delay</Head>
        </tr>
        <tr>
          <Head $height={16}>1</Head>
          <Head $left>Delta:Tolerance</Head>
          <Head rowSpan={2}>Actual</Head>
          <Head rowSpan={2}>Margin</Head>
          <Head rowSpan={2} />
        </tr>
        <tr>
          <Head $height={16}>2</Head>
          <Head>Type</Head>
          <Head>S</Head>
          <Head>Name</Head>
          <Head><UnitButton type="button">mil</UnitButton></Head>
        </tr>
      </thead>
      <tbody>
        <tr>
          <FilterCell $gray>*</FilterCell>
          {[1, 2, 3, 4, 5, 6, 7].map((n) => (
            <FilterCell key={n}>{n < 7 ? '*' : ''}</FilterCell>
          ))}
        </tr>
        {sheetRows.map((row, i) => {
          const tinted = i % 2 === 0;
          const selected = i + 45 === 61;
          return (
            <tr key={row.name}>
              <RowHead scope="row" $lit={selected}>{i + 45}</RowHead>
              <KindCell>{row.type}</KindCell>
              <KindCell />
              <NameCell $tinted={tinted} $selected={selected} $group={row.type === 'MGrp'}>
                {row.type === 'MGrp' && (
                  <GroupToggle type="button" aria-label={`${row.open ? 'Collapse' : 'Expand'} ${row.name}`}>
                    <svg width="11" height="11" viewBox="0 0 11 11" shapeRendering="crispEdges" aria-hidden="true">
                      <path d={row.open ? 'M.5.5h10v10H.5zM2 5.500h7' : 'M.5.5h10v10H.5zM2 5.500h7M5.500 2v7'} fill="#fff" stroke="#000" />
                    </svg>
                  </GroupToggle>
                )}
                {row.name}
              </NameCell>
              <DeltaCell $tinted={tinted}>{row.delta ? `0 mil:${row.delta} mil` : ''}</DeltaCell>
              <ResultCell $tinted={tinted} $failed={row.failed}>{row.actual ? `${row.actual} mil` : ''}</ResultCell>
              <ResultCell $tinted={tinted}>{row.margin ? `${row.margin} mil` : ''}</ResultCell>
              <ResultCell $tinted={tinted} />
            </tr>
          );
        })}
      </tbody>
    </SheetTable>
  );
}

function ManagerWindow() {
  return (
    <Manager>
      <ManagerTitle>
        <Icon name="pen" size={18} />
        <TitleText>
          Allegro Constraint Manager (connected to Allegro PCB Designer 17.2) [Viper_Constraint_manager] - [Electrical / Net / Ro...
        </TitleText>
        <WindowButton type="button" aria-label="Minimize">
          <svg width="11" height="11" viewBox="0 0 11 11" shapeRendering="crispEdges"><path d="M0 5.500h11" stroke="#000" /></svg>
        </WindowButton>
        <WindowButton type="button" aria-label="Maximize">
          <svg width="11" height="11" viewBox="0 0 11 11" shapeRendering="crispEdges"><path d="M.5.5h9v9h-9z" fill="none" stroke="#000" /></svg>
        </WindowButton>
        <WindowButton type="button" aria-label="Close">
          <svg width="11" height="11" viewBox="0 0 11 11"><path d="M.5.5l10 10M10.500.5l-10 10" stroke="#000" /></svg>
        </WindowButton>
      </ManagerTitle>
      <ManagerMenu>
        <Icon name="doc" size={16} />
        <Menu items={managerMenu} />
        <MdiButtons>
          <MdiButton type="button" aria-label="Minimize sheet">
            <svg width="8" height="8" viewBox="0 0 8 8"><path d="M1 6.500h6" stroke="#5a6f8c" strokeWidth="2" /></svg>
          </MdiButton>
          <MdiButton type="button" aria-label="Restore sheet">
            <svg width="8" height="8" viewBox="0 0 8 8"><path d="M2.500 2.500V.7h5v4H6M.5 3.200h5v4h-5z" fill="none" stroke="#5a6f8c" strokeWidth="1.300" /></svg>
          </MdiButton>
          <MdiButton type="button" aria-label="Close sheet">
            <svg width="8" height="8" viewBox="0 0 8 8"><path d="M1 1l6 6M7 1L1 7" stroke="#5a6f8c" strokeWidth="1.800" /></svg>
          </MdiButton>
        </MdiButtons>
      </ManagerMenu>
      <Toolbar>
        <ToolGroup $roomy>
          <Grip />
          <Tool icon="cut" label="Cut" />
          <Tool icon="copy" label="Copy" />
          <Tool icon="paste" label="Paste" />
        </ToolGroup>
        <ToolGroup $roomy>
          <Grip />
          <Tool icon="find" label="Find" />
          <Drop label="Find options" />
          <FindBox>
            <FindSelect aria-label="Find text" />
            <FindArrow><Chevron dir="down" color="#777" /></FindArrow>
          </FindBox>
          <Tool icon="flags" label="Bookmark" />
          <Tool icon="bookDown" label="Next bookmark" />
          <Tool icon="bookUp" label="Previous bookmark" />
        </ToolGroup>
        <ToolGroup $roomy>
          <Grip />
          <Tool icon="funnelRefresh" label="Refresh filter" />
          <Tool icon="funnelClear" label="Clear filter" />
          <Tool icon="funnelDrc" label="Filter DRC" />
          <Tool icon="funnelRoute" label="Filter routed" />
          <Tool icon="funnelNew" label="New filter" />
          <Tool icon="funnelGrid" label="Filter rows" />
          <Tool icon="funnelGrid" label="Filter columns" />
        </ToolGroup>
        <ToolGroup $roomy>
          <Grip />
          <Tool icon="back" label="Back" />
          <Drop label="Back list" />
          <Tool icon="forward" label="Forward" />
          <Drop label="Forward list" muted />
        </ToolGroup>
        <ToolGroup $last>
          <Grip />
          <Tool icon="rowsTool" label="Show selector" pressed />
          <Tool icon="tagTool" label="Show rules" pressed />
          <Tool icon="treeTool" label="Hierarchy" />
          <Tool icon="gridTool" label="Columns" />
        </ToolGroup>
        <MoreEnd type="button" aria-label="More tools"><MoreIcon /></MoreEnd>
      </Toolbar>
      <ManagerBody>
        <WorksheetSelector />
        <SheetPane>
          <BookTab type="button">Viper_Constraint_manager</BookTab>
          <SheetArea>
            <SheetClip>
              <Sheet />
            </SheetClip>
            <VScroll>
              <ScrollButton type="button" aria-label="Scroll rows up"><Chevron dir="up" /></ScrollButton>
              <ScrollTrack $before={14} $thumb={17} $after={497} />
              <ScrollButton type="button" aria-label="Scroll rows down"><Chevron dir="down" /></ScrollButton>
            </VScroll>
          </SheetArea>
          <SheetFooter>
            <StepButton type="button" aria-label="Previous sheet">
              <svg width="5" height="8" viewBox="0 0 5 8"><path d="M5 0v8L0 4z" /></svg>
            </StepButton>
            <StepButton type="button" aria-label="Next sheet">
              <svg width="5" height="8" viewBox="0 0 5 8"><path d="M0 0v8l5-4z" /></svg>
            </StepButton>
            <Slope />
            <SheetTab type="button">Differential Pair</SheetTab>
            <Slope />
            <SheetTab type="button" $active>Relative Propagation Delay</SheetTab>
            <HScroll $fill>
              <ScrollButton type="button" aria-label="Scroll columns left"><Chevron dir="left" /></ScrollButton>
              <ScrollTrack $row $before={110} $thumb={65} $after={66} />
              <ScrollButton type="button" aria-label="Scroll columns right"><Chevron dir="right" /></ScrollButton>
            </HScroll>
          </SheetFooter>
          <ManagerStatus>
            <StatusBox $kind="idle">Idle</StatusBox>
            <StatusBox $kind="drc">DRC</StatusBox>
            <StatusBox>Sync on.</StatusBox>
            <StatusBox>XNET</StatusBox>
          </ManagerStatus>
        </SheetPane>
      </ManagerBody>
    </Manager>
  );
}

function App() {
  return (
    <>
      <GlobalStyle />
      <Desktop>
        <DesignerWindow />
        <ManagerWindow />
      </Desktop>
    </>
  );
}

// Styled components
const Desktop = styled.main`
  display: grid;
  grid-template-columns: minmax(0, 546fr) minmax(0, 806fr);
  grid-template-rows: minmax(0, 1fr);
  height: 100vh;
`;

const Designer = styled.section`
  position: relative;
  display: flex;
  flex-direction: column;
  min-width: 0;
  min-height: 0;
  overflow: hidden;
  border-top: 1px solid #2a3350;
  background: #f0f0f0;

  &::after {
    content: '';
    position: absolute;
    inset: 0 0 0 auto;
    width: 14px;
    background: linear-gradient(to right, transparent, rgba(0, 0, 0, 0.18));
    pointer-events: none;
  }
`;

const titleBar = css`
  display: flex;
  align-items: center;
  flex: none;
  background: #fff;
  white-space: nowrap;
`;

const DesignerTitle = styled.header`
  ${titleBar}
  height: 29px;
  padding-left: 6px;
  gap: 5px;
  color: #999;
`;

const DesignerMenu = styled.nav`
  display: flex;
  align-items: center;
  flex: none;
  gap: 15px;
  height: 26px;
  padding-left: 6px;
  background: #fff;
  border-bottom: 3px solid #c80000;
  white-space: nowrap;
`;

const MenuItem = styled.button`
  flex: none;

  u {
    text-underline-offset: 2px;
  }
`;

const Toolbar = styled.div`
  display: flex;
  flex: none;
  height: 34px;
  background: #f0f0f0;
  border-top: 1px solid #fafafa;
  border-bottom: 1px solid #b4b4b4;
  overflow: hidden;
`;

const ToolGroup = styled.div`
  display: flex;
  align-items: center;
  flex: none;
  padding-right: ${({ $last, $roomy }) => ($last ? 0 : $roomy ? 3 : 2)}px;
  border-right: ${({ $last }) => ($last ? 'none' : '1px solid #b9b9b9')};
`;

const Grip = styled.span`
  flex: none;
  align-self: stretch;
  width: 8px;
  margin: 4px 0;
  background: radial-gradient(circle, #b8b8b8 1px, transparent 2px) 0 0 / 6px 5px repeat-y;
`;

const ToolButton = styled.button`
  display: flex;
  align-items: center;
  justify-content: center;
  flex: none;
  width: 31px;
  height: 29px;
  ${({ $pressed }) =>
    $pressed &&
    css`
      background: #c5def3;
      border: 1px solid #92c4ee;
    `}

  svg {
    flex: none;
    width: 22px;
    height: 22px;
  }
`;

const DropButton = styled.button`
  display: flex;
  align-items: center;
  justify-content: center;
  flex: none;
  width: 12px;
  height: 29px;
`;

const MoreButton = styled.button`
  display: flex;
  align-items: center;
  justify-content: flex-end;
  flex: none;
  align-self: stretch;
  width: ${({ $wide }) => ($wide ? 20 : 13)}px;
`;

const MoreEnd = styled(MoreButton)`
  margin-left: auto;
`;

const TabStrip = styled.div`
  display: flex;
  align-items: flex-end;
  flex: none;
  height: 30px;
  padding-left: 9px;
`;

const Tab = styled.button`
  height: ${({ $active }) => ($active ? 21 : 19)}px;
  padding: 0 ${({ $active }) => ($active ? 12 : 9)}px;
  background: ${({ $active }) => ($active ? '#fff' : '#f0f0f0')};
  border: 1px solid #d9d9d9;
  border-bottom: 0;
  font-size: 11px;
`;

const BoardFrame = styled.div`
  flex: 1;
  min-height: 0;
  margin: 0 2px 10px 7px;
  border: 1px solid #dcdcdc;
  border-right: 0;
  background: #000;
  box-shadow: inset 1px 0 #fff, inset 0 -2px #fff;
  padding: 0 0 2px 1px;
`;

const BoardSvg = styled.svg`
  display: block;
  width: 100%;
  height: 100%;
  background: #000;
`;

const BottomTools = styled.div`
  display: flex;
  align-items: center;
  flex: none;
  height: 36px;
  border-top: 1px solid #fff;
`;

const DesignerStatus = styled.footer`
  display: flex;
  flex: none;
  height: 22px;
  font-size: 11px;
  white-space: nowrap;
`;

const StatusPart = styled.div`
  display: flex;
  align-items: center;
  flex: none;
  width: ${({ $width }) => $width}px;
  padding-top: 2px;
  padding-left: ${({ $pad = 0 }) => $pad}px;
  border-right: 1px solid #cfcfcf;
`;

const Lamp = styled.span`
  align-self: stretch;
  width: 59px;
  margin-left: 4px;
  background: #00ff00;
`;

const StatusKey = styled.button`
  align-self: stretch;
  width: 21px;
  background: #e1e1e1;
  border: 1px solid #adadad;
`;

const Manager = styled.section`
  display: flex;
  flex-direction: column;
  min-width: 0;
  min-height: 0;
  background: #f0f0f0;
  border-left: 1px solid #1a7bd0;
  border-bottom: 1px solid #1a7bd0;
`;

const ManagerTitle = styled.header`
  ${titleBar}
  height: 29px;
  padding-left: 7px;
  gap: 4px;
`;

const TitleText = styled.span`
  flex: 1;
  min-width: 0;
  overflow: hidden;
`;

const WindowButton = styled.button`
  display: flex;
  align-items: center;
  justify-content: center;
  flex: none;
  width: 42px;
  height: 28px;

  &:last-child {
    width: 34px;
  }
`;

const ManagerMenu = styled.nav`
  display: flex;
  align-items: center;
  flex: none;
  gap: 16px;
  height: 22px;
  background: #fff;
  white-space: nowrap;

  > svg {
    margin-right: -8px;
  }
`;

const MdiButtons = styled.div`
  display: flex;
  gap: 2px;
  margin-left: auto;
  margin-right: -5px;
`;

const MdiButton = styled.button`
  display: flex;
  align-items: center;
  justify-content: center;
  width: 16px;
  height: 17px;
  background: #fff;
  border: 1px solid #dcdcdc;
`;

const FindBox = styled.div`
  position: relative;
  width: 69px;
  height: 20px;
  margin-left: 1px;
`;

const FindSelect = styled.select`
  width: 100%;
  height: 100%;
  appearance: none;
  background: #fff;
  border: 1px solid #7a7a7a;
`;

const FindArrow = styled.span`
  position: absolute;
  top: 5px;
  right: 3px;
  line-height: 0;
  pointer-events: none;
`;

const ManagerBody = styled.div`
  display: flex;
  flex: 1;
  min-height: 0;
`;

const Dock = styled.aside`
  position: relative;
  z-index: 1;
  display: flex;
  flex-direction: column;
  flex: none;
  width: 262px;
  margin-left: -3px;
  padding: 0 5px 18px 0;
  border: 4px solid #ff0000;
  background: #f0f0f0;
`;

const DockHeader = styled.div`
  display: flex;
  align-items: center;
  justify-content: space-between;
  flex: none;
  height: 16px;
  margin-bottom: 2px;
  background: #d9d9d9;
  font-size: 11px;
`;

const DockButtons = styled.div`
  display: flex;
  gap: 6px;
  padding-right: 4px;
`;

const DockButton = styled.button`
  display: flex;
`;

const Category = styled.button`
  display: grid;
  grid-template-columns: 20px 1fr 24px;
  align-items: center;
  justify-items: center;
  flex: none;
  height: 20px;
  border-right: 1px solid #000;
  border-bottom: 1px solid #000;
  background: #f0f0f0;
  box-shadow: inset 0 1px #fff;
  font-family: 'Liberation Sans', Arial, sans-serif;
  font-size: 13px;
  outline: ${({ $active }) => ($active ? '1px solid #f00' : 'none')};
  outline-offset: -3px;
`;

const TreeArea = styled.div`
  display: flex;
  flex: 1;
  min-height: 0;
  background: #fff;
`;

const TreeList = styled.ul`
  flex: 1;
  min-width: 0;
  margin: 0;
  padding: 0 0 0 1px;
  list-style: none;
  overflow: hidden;
`;

const TreeRow = styled.li`
  display: flex;
  align-items: center;
  height: 18px;
  white-space: nowrap;
  font-weight: ${({ $bold }) => ($bold ? 'bold' : 'normal')};
`;

const Guide = styled.span`
  position: relative;
  display: flex;
  align-items: center;
  justify-content: center;
  flex: none;
  width: 19px;
  height: 18px;

  &::before {
    content: '';
    position: absolute;
    top: 0;
    left: 9px;
    height: ${({ $kind }) => ($kind === 'last' ? '10px' : '18px')};
    border-left: ${({ $kind }) => ($kind === 'none' ? '0' : '1px dotted #808080')};
  }

  &::after {
    content: '';
    position: absolute;
    top: 9px;
    left: 9px;
    width: 10px;
    border-top: ${({ $kind }) => ($kind === 'none' || $kind === 'line' ? '0' : '1px dotted #808080')};
  }
`;

const Toggle = styled.button`
  position: relative;
  z-index: 1;
  display: flex;
  align-items: center;
  justify-content: center;
  width: 9px;
  height: 9px;
  background: #fff;
  border: 1px solid #919191;
`;

const TreeIcon = styled.span`
  display: flex;
  justify-content: center;
  flex: none;
  width: 18px;
  margin-right: 4px;
`;

const TreeLabel = styled.span`
  overflow: hidden;
`;

const VScroll = styled.div`
  display: flex;
  flex-direction: column;
  flex: none;
  width: 16px;
  background: #f0f0f0;
`;

const HScroll = styled.div`
  display: flex;
  flex: ${({ $fill }) => ($fill ? '1' : 'none')};
  height: 15px;
  padding-right: ${({ $fill }) => ($fill ? 16 : 17)}px;
  background: #f0f0f0;
`;

const ScrollButton = styled.button`
  display: flex;
  align-items: center;
  justify-content: center;
  flex: none;
  width: 16px;
  height: 16px;
`;

const ScrollTrack = styled.div`
  flex: 1;
  background: linear-gradient(#cdcdcd, #cdcdcd) no-repeat;
  ${({ $row, $before, $thumb, $after }) => {
    const size = (100 * $thumb) / ($before + $thumb + $after);
    const at = (100 * $before) / ($before + $after);
    return $row
      ? css`
          background-size: ${size}% 100%;
          background-position: ${at}% 0;
        `
      : css`
          background-size: 100% ${size}%;
          background-position: 0 ${at}%;
        `;
  }}
`;

const SheetPane = styled.div`
  display: flex;
  flex-direction: column;
  flex: 1;
  min-width: 0;
`;

const BookTab = styled.button`
  align-self: flex-start;
  flex: none;
  height: 21px;
  margin: 3px 0 2px 8px;
  padding: 0 2px 0 5px;
  border-left: 1px solid #fff;
  border-top: 1px solid #fff;
  border-right: 2px solid #000;
  font-family: 'Liberation Sans', Arial, sans-serif;
  font-size: 12px;
  font-weight: bold;
`;

const SheetArea = styled.div`
  display: flex;
  flex: 1;
  min-height: 0;
  margin-right: 2px;
  border-top: 1px solid #000;
  border-left: 2px solid #000;
`;

const SheetClip = styled.div`
  flex: 1;
  min-width: 0;
  overflow: hidden;
`;

const SheetTable = styled.table`
  width: calc(100% + 27px);
  table-layout: fixed;
  border-collapse: separate;
  border-spacing: 0;
  font-family: 'Liberation Sans', Arial, sans-serif;
  font-size: 11px;
  line-height: 14px;
  white-space: nowrap;

  th, td {
    padding: 0;
    overflow: hidden;
  }
`;

const Head = styled.th`
  height: ${({ $height }) => ($height ? `${$height}px` : 'auto')};
  background: #f0f0f0;
  border-right: 2px solid #000;
  border-bottom: 2px solid #000;
  box-shadow: inset 1px 1px #fff;
  text-align: ${({ $left }) => ($left ? 'left' : 'center')};
  text-indent: ${({ $left }) => ($left ? 2 : 0)}px;
`;

const UnitButton = styled.button`
  display: block;
  width: calc(100% - 4px);
  height: 12px;
  margin: 1px 2px 0;
  background: #e1e1e1;
  border: 1px solid #adadad;
  line-height: 12px;
  overflow: hidden;
`;

const FilterCell = styled.td`
  height: 19px;
  background: ${({ $gray }) => ($gray ? '#f0f0f0' : '#fff')};
  border-right: 1px solid #696969;
  border-bottom: 1px solid #696969;
  box-shadow: inset 0 -2px #d5d5d5;
  text-indent: 2px;
  vertical-align: top;
`;

const RowHead = styled.th`
  height: 16px;
  background: ${({ $lit }) => ($lit ? '#f8f8f8' : '#f0f0f0')};
  border-right: 2px solid #000;
  border-bottom: 1px solid #000;
  text-align: left;
  text-indent: 2px;
`;

const KindCell = styled.td`
  background: #f0f0f0;
  border-right: 2px solid #000;
  border-bottom: 1px solid #000;
  font-weight: bold;
  text-indent: 2px;
`;

const dataCell = css`
  background-color: ${({ $tinted }) => ($tinted ? '#e8f8e8' : '#fff')};
  border-right: 1px solid #696969;
  border-bottom: 1px solid #696969;
`;

const NameCell = styled.td`
  ${dataCell}
  font-family: Roboto, 'Liberation Sans', sans-serif;
  font-weight: bold;
  text-indent: ${({ $group }) => ($group ? 10 : 46)}px;
  ${({ $selected }) =>
    $selected &&
    css`
      background-color: #9dbcff;
      box-shadow: inset 0 0 0 1px #5c4a1e;
    `}
`;

const GroupToggle = styled.button`
  width: 11px;
  height: 11px;
  margin-right: 15px;
  text-indent: 0;
  vertical-align: -2px;
  line-height: 0;
`;

const DeltaCell = styled.td`
  ${dataCell}
  text-indent: 2px;
`;

const ResultCell = styled.td`
  ${dataCell}
  color: #ff0000;
  font-weight: bold;
  text-indent: 2px;
  background-color: ${({ $failed, $tinted }) => ($failed ? '#ff0000' : $tinted ? '#e8f8e8' : '#fff')};
  ${({ $failed }) => {
    const ink = $failed ? '#fff' : '#d8d8d8';
    return css`
      background-image:
        linear-gradient(45deg, transparent 46%, ${ink} 46% 54%, transparent 54%),
        linear-gradient(-45deg, transparent 46%, ${ink} 46% 54%, transparent 54%);
      background-size: 8px 8px;
    `;
  }}
`;

const SheetFooter = styled.div`
  display: flex;
  flex: none;
  height: 16px;
  padding-left: 2px;
  margin-bottom: 3px;
`;

const StepButton = styled.button`
  display: flex;
  align-items: center;
  justify-content: center;
  flex: none;
  width: 15px;
  height: 15px;
  margin-right: 2px;
  background: #f0f0f0;
  border: 1px solid #adadad;
`;

const SlopeSvg = styled.svg`
  flex: none;
`;

const SheetTab = styled.button`
  flex: none;
  height: 16px;
  overflow: hidden;
  white-space: nowrap;
  font-family: 'Liberation Sans', Arial, sans-serif;
  font-size: 12px;
  text-align: left;
  ${({ $active }) =>
    $active
      ? css`
          width: 107px;
          background: #d5e7f7;
          border-right: 1px solid #000;
          font-weight: bold;
        `
      : css`
          width: 91px;
          border-top: 1px solid #000;
        `}
`;

const ManagerStatus = styled.footer`
  display: flex;
  align-items: center;
  justify-content: flex-end;
  flex: none;
  gap: 6px;
  height: 24px;
  padding-right: 13px;
  border-top: 2px solid #222;
`;

const StatusBox = styled.div`
  display: flex;
  align-items: center;
  justify-content: center;
  width: 80px;
  height: 16px;
  border: 1px solid #c3c3c3;
  color: #8b8b8b;
  ${({ $kind }) =>
    $kind === 'idle' &&
    css`
      justify-content: flex-start;
      height: 13px;
      padding-left: 3px;
      border: 0;
      background: #00ff00;
      color: #000;
    `}
  ${({ $kind }) =>
    $kind === 'drc' &&
    css`
      border: 0;
      background: #ff0000;
      color: #fff;
    `}
`;

export default App;
